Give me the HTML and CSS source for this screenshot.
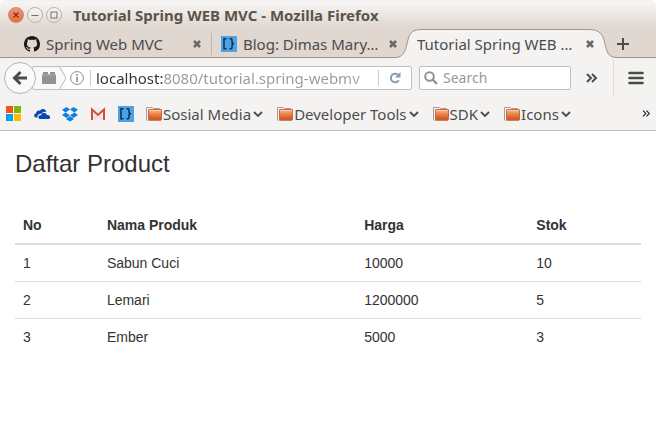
FILE: index.html
```html
<!DOCTYPE html>
<html lang="en">
<head>
<meta charset="utf-8">
<title>Tutorial Spring WEB MVC</title>
<link rel="stylesheet" href="styles.css">
</head>
<body>
<svg class="defs" aria-hidden="true">
  <defs>
    <linearGradient id="orange" x1="0" y1="0" x2="0" y2="1"><stop offset="0" stop-color="#f7b98c"/><stop offset="0.5" stop-color="#e87e43"/><stop offset="1" stop-color="#d04a1c"/></linearGradient>
    <symbol id="folder" viewBox="0 0 16 16">
      <path d="M.5 14.500V1.500H6.500L7.500 2.500H13.500V5" fill="#f8f7f6" stroke="#a19d99"/>
      <path d="M2 14.500H15" stroke="#b0a8a2"/>
      <rect x="2.500" y="3.500" width="13" height="10.500" rx="0.500" fill="url(#orange)" stroke="#cf6637"/>
      <path d="M3 4.500H15" stroke="#f9cfae"/>
    </symbol>
    <symbol id="chevron" viewBox="0 0 10 8"><path d="M1 2L5 6L9 2" fill="none" stroke="#4c4c4c" stroke-width="1.800"/></symbol>
    <symbol id="close" viewBox="0 0 10 10"><path d="M2 2L8 8M8 2L2 8" stroke="#6b6864" stroke-width="2.600"/></symbol>
    <symbol id="braces" viewBox="0 0 16 16">
      <rect width="16" height="16" fill="#48a3ea"/>
      <path d="M5.500 2.700H3V12.800H5.500M8.500 2.700H10Q11 2.700 11 4V6Q11 7.700 13 7.700Q11 7.700 11 9.400V11.500Q11 12.800 10 12.800H8.500" fill="none" stroke="#182c3c" stroke-width="1.500"/>
    </symbol>
    <symbol id="more" viewBox="0 0 12 10"><path d="M1 1L5 5L1 9M6 1L10 5L6 9" fill="none" stroke="currentColor" stroke-width="var(--w)"/></symbol>
  </defs>
</svg>

<header class="titlebar">
  <button class="win win-close" aria-label="Close window"><svg viewBox="0 0 8 8"><path d="M1.500 1.500L6.500 6.500M6.500 1.500L1.500 6.500" stroke="#6b3423" stroke-width="1.200"/></svg></button>
  <button class="win" aria-label="Minimize"><svg viewBox="0 0 8 8"><path d="M.5 4.500H7.500" stroke="#77726c"/></svg></button>
  <button class="win" aria-label="Maximize"><svg viewBox="0 0 8 8"><rect x="1" y="1" width="6" height="6" fill="none" stroke="#77726c"/></svg></button>
  <span class="title">Tutorial Spring WEB MVC - Mozilla Firefox</span>
</header>

<nav class="tabs" aria-label="Tabs">
  <div class="tab tab-first">
    <svg class="icon" viewBox="0 0 16 16"><path fill="#1b1817" d="M8 0C3.580 0 0 3.580 0 8c0 3.540 2.290 6.530 5.470 7.590.4.070.55-.17.55-.38 0-.19-.01-.82-.01-1.490-2.010.37-2.530-.49-2.690-.94-.09-.23-.48-.94-.82-1.130-.28-.15-.68-.52-.01-.53.63-.01 1.080.58 1.230.82.72 1.210 1.870.87 2.330.66.070-.52.28-.87.51-1.070-1.780-.2-3.640-.89-3.640-3.950 0-.87.31-1.590.82-2.150-.08-.2-.36-1.020.08-2.120 0 0 .67-.21 2.200.82.640-.18 1.320-.27 2-.27s1.360.09 2 .27c1.530-1.040 2.200-.82 2.200-.82.44 1.100.16 1.920.08 2.120.51.56.82 1.270.82 2.150 0 3.070-1.870 3.750-3.650 3.950.29.25.54.73.54 1.480 0 1.070-.01 1.930-.01 2.200 0 .21.15.46.55.38A8.010 8.010 0 0 0 16 8c0-4.420-3.580-8-8-8z"/></svg>
    <a href="#" class="label">Spring Web MVC</a>
    <button class="x" aria-label="Close tab"><svg><use href="#close"/></svg></button>
  </div>
  <div class="tab tab-second">
    <svg class="icon"><use href="#braces"/></svg>
    <a href="#" class="label">Blog: Dimas Mary…</a>
    <button class="x" aria-label="Close tab"><svg><use href="#close"/></svg></button>
  </div>
  <div class="tab tab-active">
    <svg class="shape" viewBox="0 0 222 30" preserveAspectRatio="none"><path d="M0 29.500C8 29.500 10 24 12 16C14 7 15 1.500 27 1.500H193C206 1.500 208 7 210 16C212 24 213 29.500 222 29.500V30H0Z" fill="#f4f3f2"/><path d="M0 29.500C8 29.500 10 24 12 16C14 7 15 1.500 27 1.500H193C206 1.500 208 7 210 16C212 24 213 29.500 222 29.500" fill="none" stroke="#9d958e"/></svg>
    <a href="#" class="label">Tutorial Spring WEB …</a>
    <button class="x" aria-label="Close tab"><svg><use href="#close"/></svg></button>
  </div>
  <button class="newtab" aria-label="New tab"><svg viewBox="0 0 12 12"><path d="M6 0V12M0 6H12" stroke="#4c4c4c" stroke-width="2"/></svg></button>
</nav>

<section class="toolbar" aria-label="Navigation">
  <button class="back" aria-label="Back"><svg viewBox="0 0 16 16"><path d="M8.500 2L2.500 8L8.500 14M3 8H15" fill="none" stroke="#4c4c4c" stroke-width="3"/></svg></button>
  <div class="urlbar">
    <svg class="plugin" viewBox="0 0 14 12"><path d="M1 0H6V2.500H8V0H13V2.500H14V12H0V2.500H1Z" fill="#929292"/><path d="M0 3H14" stroke="#a9a9a9"/></svg>
    <svg class="arrow" viewBox="0 0 8 22"><path d="M.5 0L7 11L.5 22" fill="none" stroke="#bcb9b6"/></svg>
    <svg class="info" viewBox="0 0 14 14"><circle cx="7" cy="7" r="6.400" fill="none" stroke="#8b8b8b"/><path d="M7 6V11M7 3V4.700" stroke="#8b8b8b" stroke-width="1.600"/></svg>
    <span class="rule"></span>
    <input class="address" aria-label="Address" value="localhost:8080/tutorial.spring-webmv">
    <button class="reload" aria-label="Reload"><svg viewBox="0 0 12 12"><path d="M9 2.800A4.300 4.300 0 1 0 9.800 8.300" fill="none" stroke="#8b9bad" stroke-width="2"/><path d="M11.500 0V5.500H6Z" fill="#8b9bad"/></svg></button>
  </div>
  <label class="search">
    <svg viewBox="0 0 14 14"><circle cx="5.500" cy="5.500" r="4.300" fill="none" stroke="#929292" stroke-width="2"/><path d="M8.700 8.700L13 13" stroke="#929292" stroke-width="2.400"/></svg>
    <input type="search" placeholder="Search" aria-label="Search">
  </label>
  <button class="overflow" aria-label="More tools"><svg><use href="#more"/></svg></button>
  <button class="menu" aria-label="Open menu"><svg viewBox="0 0 16 14"><path d="M1.500 2H14.500M1.500 7H14.500M1.500 12H14.500" stroke="#4a4a48" stroke-width="2.600" stroke-linecap="round"/></svg></button>
</section>

<nav class="bookmarks" aria-label="Bookmarks">
  <a href="#" class="site" aria-label="Microsoft"><svg viewBox="0 0 16 16"><path fill="#f65314" d="M0 0H7V7H0z"/><path fill="#7cbb00" d="M8 0H15V7H8z"/><path fill="#00a1f1" d="M0 8H7V15H0z"/><path fill="#ffbb00" d="M8 8H15V15H8z"/></svg></a>
  <a href="#" class="site" aria-label="OneDrive"><svg viewBox="0 0 16 16"><path fill="#094ab2" d="M3.500 11.500H2C-.5 11-.4 7.800 2 7.400C2 5 4.500 4 6 4.700C7.500 1.800 12 2.500 12.300 6C9.500 5 8 6.500 7.700 7.800C4.500 7.500 3 9.500 3.500 11.500Z"/><path fill="#094ab2" d="M6 13C3.500 12.700 3.800 9 7.300 9C8 6 12.200 6 12.800 9C16.800 8.600 17 12.700 14.500 13Z"/></svg></a>
  <a href="#" class="site" aria-label="Dropbox"><svg viewBox="0 0 16 16"><path fill="#0b7fe3" d="M4.600 1L8 3.600L3.500 6.400L0 3.700ZM11.400 1L16 3.700L12.500 6.400L8 3.600ZM0 9.100L3.500 6.400L8 9.200L4.600 12ZM12.500 6.400L16 9.100L11.400 12L8 9.200ZM4.600 12.600L8 10.200L11.400 12.600V13.500L8 15.500L4.600 13.500Z"/></svg></a>
  <a href="#" class="site" aria-label="Gmail"><svg viewBox="0 0 16 16"><path fill="#eeeceb" d="M2 3H14V14H2z"/><path d="M4 13L8 9L12 13" fill="none" stroke="#d5d2d0"/><path d="M2 14V3.500L8 9L14 3.500V14" fill="none" stroke="#d54b3d" stroke-width="2"/></svg></a>
  <a href="#" class="site" aria-label="Blog"><svg><use href="#braces"/></svg></a>
  <button class="folder"><svg class="icon"><use href="#folder"/></svg>Sosial Media<svg class="chev"><use href="#chevron"/></svg></button>
  <button class="folder"><svg class="icon"><use href="#folder"/></svg>Developer Tools<svg class="chev"><use href="#chevron"/></svg></button>
  <button class="folder"><svg class="icon"><use href="#folder"/></svg>SDK<svg class="chev"><use href="#chevron"/></svg></button>
  <button class="folder"><svg class="icon"><use href="#folder"/></svg>Icons<svg class="chev"><use href="#chevron"/></svg></button>
  <button class="more" aria-label="More bookmarks"><svg viewBox="0 0 12 10"><use href="#more"/></svg></button>
</nav>

<main>
  <h1>Daftar Product</h1>
  <table>
    <colgroup><col class="c-no"><col class="c-name"><col class="c-price"><col></colgroup>
    <thead><tr><th>No</th><th>Nama Produk</th><th>Harga</th><th>Stok</th></tr></thead>
    <tbody>
      <tr><td>1</td><td>Sabun Cuci</td><td>10000</td><td>10</td></tr>
      <tr><td>2</td><td>Lemari</td><td>1200000</td><td>5</td></tr>
      <tr><td>3</td><td>Ember</td><td>5000</td><td>3</td></tr>
    </tbody>
  </table>
</main>
</body>
</html>
```
FILE: styles.css
```css
* { box-sizing: border-box; }
body { margin: 0; background: #fff; font: 14px/20px "Noto Sans", "Open Sans", sans-serif; color: #4c4c4c; }
button { padding: 0; border: 0; background: none; font: inherit; color: inherit; display: flex; align-items: center; justify-content: center; flex: none; }
a { color: inherit; text-decoration: none; }
input { border: 0; padding: 0; background: none; font: inherit; outline: 0; min-width: 0; }
svg { display: block; flex: none; }
.defs { position: absolute; width: 0; height: 0; }
.icon { width: 16px; height: 16px; }

.titlebar { display: flex; align-items: center; gap: 3px; height: 28px; padding: 1px 8px 0; border-top: 1px solid #f2f0ee; border-radius: 6px 6px 0 0; background: linear-gradient(#f8f6f4, #dfd7d0); }
.win { width: 16px; height: 16px; border: 1px solid #b9b2ab; border-radius: 50%; background: linear-gradient(#f8f6f4, #e5dfda); }
.win-close { background: linear-gradient(#f7936f, #ee6b3c); border-color: #c98a72; }
.win svg { width: 8px; height: 8px; }
.title { margin-left: 8px; font-size: 15px; font-weight: 700; color: #5c544b; white-space: nowrap; }

.tabs { display: flex; height: 30px; background: #dfd7d0; border-bottom: 1px solid #9d958e; font-size: 15px; }
.tab { position: relative; display: flex; align-items: center; height: 30px; padding-top: 2px; min-width: 0; }
.tab .label { flex: 1; margin: 0 8px 0 6px; overflow: hidden; text-overflow: ellipsis; white-space: nowrap; }
.x, .x svg { width: 10px; height: 10px; }
.tab-first { flex: 0 1 212px; padding-left: 24px; padding-right: 10px; }
.tab-first::after { content: ""; position: absolute; right: 0; top: 5px; bottom: 3px; width: 1px; background: #bfb6ae; }
.tab-second { flex: 0 1 194px; padding-left: 9px; padding-right: 8px; }
.tab-active { flex: 0 1 203px; padding-left: 5px; padding-right: 14px; }
.tab-active .label, .tab-active .x { position: relative; }
.shape { position: absolute; left: -11px; top: 0; width: calc(100% + 19px); height: 30px; }
.newtab { position: relative; width: 28px; padding-top: 3px; }
.newtab svg { width: 12px; height: 12px; }

.toolbar { display: flex; align-items: center; height: 40px; padding: 0 12px 0 4px; background: #f4f3f2; }
.back { position: relative; z-index: 1; width: 32px; height: 32px; border: 1px solid #b5b2af; border-radius: 50%; background: #faf9f9; }
.back svg { width: 16px; height: 16px; }
.urlbar { flex: 1; display: flex; align-items: center; height: 24px; margin-left: -4px; padding-left: 9px; border: 1px solid #c2bfbc; border-radius: 2px; min-width: 0; background: linear-gradient(90deg, #f9f8f8 26px, #fff 34px); }
.plugin { width: 14px; height: 12px; }
.arrow { width: 8px; height: 22px; margin: 0 3px; }
.info { width: 14px; height: 14px; }
.rule { width: 1px; height: 16px; margin: 0 5px 0 6px; background: #cfcdcb; }
.address { flex: 1; height: 22px; font-size: 15px; line-height: 22px; -webkit-text-fill-color: transparent; background: linear-gradient(90deg, #333 68px, #999 68px, #999 250px, #aaa 260px); -webkit-background-clip: text; background-clip: text; }
.reload { width: 33px; height: 16px; border-left: 1px solid #cfcdcb; }
.reload svg { width: 12px; height: 12px; }
.search { flex: 0 1 152px; display: flex; align-items: center; gap: 5px; height: 24px; margin-left: 7px; padding: 0 4px; background: #fff; border: 1px solid #c2bfbc; border-radius: 2px; min-width: 0; }
.search svg { width: 14px; height: 14px; }
.search input { flex: 1; }
.search input::placeholder { color: #999; opacity: 1; }
.overflow { width: 43px; height: 38px; --w: 2; border-right: 1px solid #dddad7; }
.overflow svg { width: 12px; height: 10px; }
.menu { margin-left: 14px; }
.menu svg { width: 16px; height: 14px; }

.bookmarks { display: flex; align-items: center; gap: 12px; height: 33px; padding: 0 4px 1px 6px; background: #f4f3f2; border-bottom: 1px solid #c5c0bb; font-size: 15px; }
.site, .site svg { display: block; width: 16px; height: 16px; }
.folder { gap: 1px; margin-right: 2px; white-space: nowrap; }
.chev { width: 10px; height: 8px; margin-left: 1px; }
.more { margin-left: auto; color: #111; --w: 1.5; }
.more svg { width: 11px; height: 7px; }

main { padding: 16px 15px; font-family: "Liberation Sans", Arial, sans-serif; color: #333; }
h1 { margin: 4px 0 30px; font-size: 24px; line-height: 26px; font-weight: 400; }
table { width: 100%; table-layout: fixed; border-collapse: collapse; }
th, td { padding: 8px; text-align: left; }
th { border-bottom: 2px solid #ddd; }
tr + tr td { border-top: 1px solid #ddd; }
.c-no { width: 13.4%; }
.c-name { width: 41.1%; }
.c-price { width: 27.5%; }
```
